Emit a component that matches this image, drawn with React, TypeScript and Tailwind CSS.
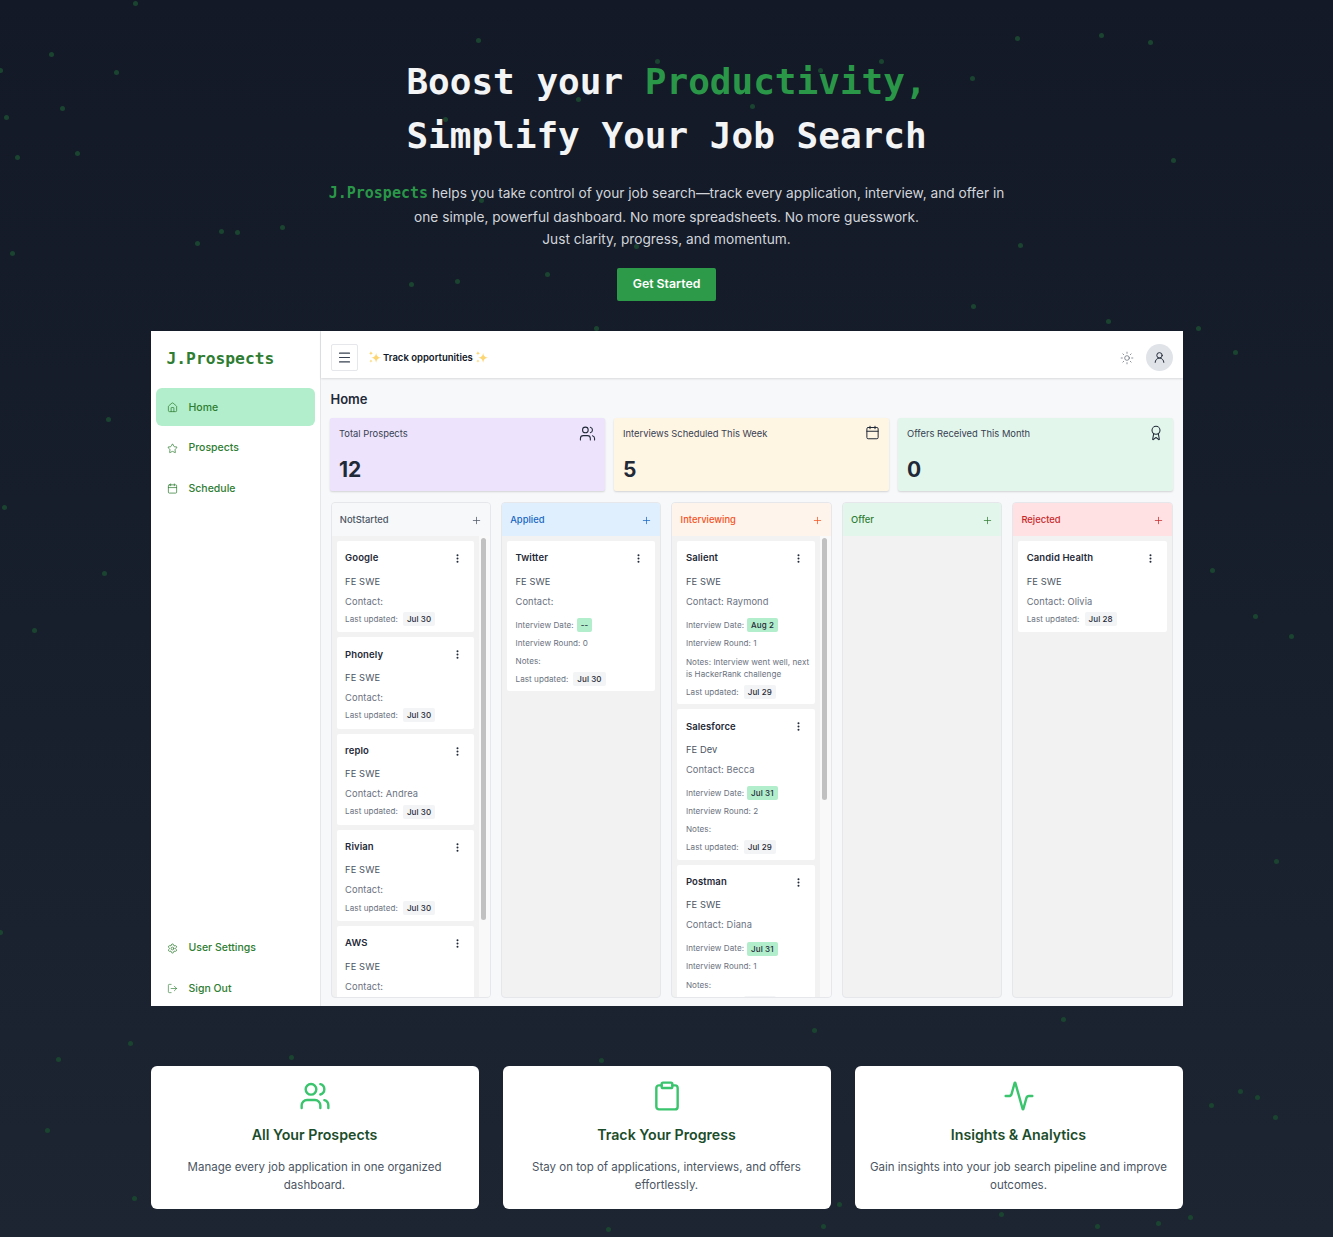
import {
  Activity,
  Award,
  Calendar,
  Clipboard,
  EllipsisVertical,
  House,
  LogOut,
  Menu,
  Plus,
  Settings,
  Star,
  Sun,
  UserRound,
  Users,
} from 'lucide-react';

const dots = [
  [135, 3], [51, 54], [116, 72], [0, 70], [62, 108], [6, 117], [17, 157], [77, 153], [478, 40], [657, 61],
  [881, 61], [820, 70], [972, 78], [578, 99], [752, 106], [445, 119], [481, 200], [636, 246], [1017, 38],
  [1101, 35], [1150, 42], [1173, 160], [197, 243], [221, 231], [237, 232], [282, 227], [12, 253], [547, 274],
  [411, 284], [457, 281], [1020, 245], [973, 306], [1108, 321], [1198, 328], [1235, 352], [1212, 570],
  [1255, 616], [1291, 636], [1276, 861], [104, 573], [34, 630], [4, 507], [108, 419], [0, 932], [130, 1043],
  [58, 1059], [47, 1130], [291, 1057], [814, 1030], [1063, 1019], [1211, 1105], [1240, 1091], [1257, 1097],
  [1275, 1117], [1158, 1223], [1097, 1226], [1001, 1214], [839, 1204], [608, 1229], [823, 1226], [601, 1060],
  [1190, 1217], [596, 328], [134, 1198],
];

type Prospect = {
  name: string;
  role: string;
  contact?: string;
  updated: string;
  interview?: string;
  round?: number;
  notes?: string;
};

const notStarted: Prospect[] = [
  { name: 'Google', role: 'FE SWE', updated: 'Jul 30' },
  { name: 'Phonely', role: 'FE SWE', updated: 'Jul 30' },
  { name: 'replo', role: 'FE SWE', contact: 'Andrea', updated: 'Jul 30' },
  { name: 'Rivian', role: 'FE SWE', updated: 'Jul 30' },
  { name: 'AWS', role: 'FE SWE', updated: 'Jul 30' },
];

const applied: Prospect[] = [
  { name: 'Twitter', role: 'FE SWE', updated: 'Jul 30', interview: '--', round: 0 },
];

const interviewing: Prospect[] = [
  {
    name: 'Salient',
    role: 'FE SWE',
    contact: 'Raymond',
    updated: 'Jul 29',
    interview: 'Aug 2',
    round: 1,
    notes: 'Interview went well, next is HackerRank challenge',
  },
  { name: 'Salesforce', role: 'FE Dev', contact: 'Becca', updated: 'Jul 29', interview: 'Jul 31', round: 2 },
  { name: 'Postman', role: 'FE SWE', contact: 'Diana', updated: 'Jul 29', interview: 'Jul 31', round: 1 },
];

const rejected: Prospect[] = [{ name: 'Candid Health', role: 'FE SWE', contact: 'Olivia', updated: 'Jul 28' }];

function Sparkle() {
  return (
    <svg viewBox="0 0 24 24" className="h-[13px] w-[13px] shrink-0" fill="#fcd673">
      <path d="M15 3c1 6.200 3 8.300 9 9.300-6 1-8 3.100-9 9.300-1-6.200-3-8.300-9-9.300 6-1 8-3.100 9-9.300z" />
      <path d="M5.500 0c.5 2.800 1.300 3.700 4 4.200-2.700.5-3.500 1.400-4 4.200-.5-2.800-1.300-3.700-4-4.200 2.700-.5 3.500-1.400 4-4.200z" />
      <path d="M5.500 15c.4 2.300 1.100 3 3.500 3.500-2.400.5-3.100 1.200-3.500 3.500-.4-2.300-1.100-3-3.500-3.500 2.400-.5 3.100-1.200 3.500-3.500z" />
    </svg>
  );
}

function NavItem({ icon, label, active }: { icon: React.ReactNode; label: string; active?: boolean }) {
  return (
    <div
      className={`flex h-[38px] items-center gap-[11px] rounded-[6px] pl-[11px] pt-px text-[10.500px] font-medium text-[#2e7d32] ${
        active ? 'bg-[#b2eecb]' : ''
      }`}
    >
      {icon}
      <span>{label}</span>
    </div>
  );
}

function Sidebar() {
  return (
    <aside className="flex w-[170px] shrink-0 flex-col border-r border-[#e5e7eb] bg-white px-[5px]">
      <div className="flex h-[57px] items-center pl-[11px] font-['DejaVu_Sans_Mono',monospace] text-[16.300px] font-bold text-[#2e7d32]">
        J.Prospects
      </div>
      <nav className="flex flex-col gap-[2.500px]">
        <NavItem active label="Home" icon={<House size={11} strokeWidth={1.6} />} />
        <NavItem label="Prospects" icon={<Star size={11} strokeWidth={1.6} />} />
        <NavItem label="Schedule" icon={<Calendar size={11} strokeWidth={1.6} />} />
      </nav>
      <div className="-mb-px mt-auto flex flex-col gap-[2.500px]">
        <NavItem label="User Settings" icon={<Settings size={11} strokeWidth={1.6} />} />
        <NavItem label="Sign Out" icon={<LogOut size={11} strokeWidth={1.4} />} />
      </div>
    </aside>
  );
}

function Topbar() {
  return (
    <header className="z-10 flex h-[47px] shrink-0 items-center bg-white px-[10px] pt-[6px] shadow-[0_1px_2px_rgba(0,0,0,0.12)]">
      <button className="flex h-[27px] w-[27px] items-center justify-center rounded-[2px] border border-[#e5e7eb] text-[#374151]">
        <Menu size={15} strokeWidth={1.8} />
      </button>
      <div className="ml-[10px] flex items-center gap-[2.500px] text-[9.500px] font-semibold text-[#111827]">
        <Sparkle />
        <span className="mt-px">Track opportunities</span>
        <Sparkle />
      </div>
      <div className="ml-auto flex items-center gap-[12px]">
        <Sun size={14} strokeWidth={1.1} className="text-[#4b5563]" />
        <div className="flex h-[27px] w-[27px] items-center justify-center rounded-full bg-[#e0e3e8] text-[#1f2937]">
          <UserRound size={13} strokeWidth={1.8} />
        </div>
      </div>
    </header>
  );
}

function StatCard({ label, value, icon, tone }: { label: string; value: number; icon: React.ReactNode; tone: string }) {
  return (
    <div className={`flex h-[73px] flex-col rounded-[2px] pl-[9.500px] pr-[9px] pt-[7px] shadow-[0_1px_2px_rgba(0,0,0,0.15)] ${tone}`}>
      <div className="flex h-[18px] items-start justify-between text-[#1f2937]">
        <span className="mt-[2px] text-[9.400px] leading-[14px] text-[#374151]">{label}</span>
        {icon}
      </div>
      <div className="mt-[15px] text-[21px] font-bold leading-[24px] text-[#1f2937]">{value}</div>
    </div>
  );
}

function Pill({ children, green }: { children: React.ReactNode; green?: boolean }) {
  return (
    <span
      className={`ml-[3px] inline-flex h-[14px] items-center rounded-[2px] px-[4px] text-[8px] font-medium tracking-[0.1px] text-[#1f2937] ${
        green ? 'bg-[#b2eecb]' : 'bg-[#f3f4f6]'
      }`}
    >
      {children}
    </span>
  );
}

function ProspectCard({ p }: { p: Prospect }) {
  const hasInterview = p.interview !== undefined;
  const multi = (p.notes ?? '').length > 30;
  const small = 'text-[8.100px] tracking-[0.05px] text-[#6b7280]';
  return (
    <div className={`shrink-0 rounded-[2px] bg-white pl-[8.600px] pr-[8.400px] pt-[8.500px] ${hasInterview ? 'pb-[5.250px]' : 'pb-[6.250px]'}`}>
      <div className="flex h-[18px] items-center justify-between">
        <span className="text-[9.500px] font-semibold tracking-[0.1px] text-[#1f2937]">{p.name}</span>
        <span className="flex w-[16px] justify-center text-[#1f2937]">
          <EllipsisVertical size={11} strokeWidth={2.4} />
        </span>
      </div>
      <div className="mt-[6px] h-[16px] text-[9.300px] leading-[16px] tracking-[0.1px] text-[#4b5563]">{p.role}</div>
      <div className="mt-[4px] h-[16px] text-[9.300px] leading-[16px] tracking-[0.1px] text-[#6b7280]">
        Contact:{p.contact ? ` ${p.contact}` : ''}
      </div>
      {hasInterview && (
        <>
          <div className={`mt-[8.500px] flex h-[14px] items-center ${small}`}>
            Interview Date: <Pill green>{p.interview}</Pill>
          </div>
          <div className={`mt-[4px] flex h-[14px] items-center ${small}`}>Interview Round: {p.round}</div>
          <div className={`mt-[4px] ${small} ${multi ? '-mr-[5px] py-[1.500px] leading-[12px]' : 'h-[14px] leading-[14px]'}`}>
            Notes:{p.notes ? ` ${p.notes}` : ''}
          </div>
        </>
      )}
      <div className={`flex h-[14px] items-center ${small} ${hasInterview ? 'mt-[4px]' : 'mt-[2.500px]'}`}>
        Last updated: <span className="w-[2px]" />
        <Pill>{p.updated}</Pill>
      </div>
    </div>
  );
}

function BoardColumn({
  title,
  head,
  items,
  thumb,
}: {
  title: string;
  head: string;
  items: Prospect[];
  thumb?: string;
}) {
  return (
    <section className="flex min-h-0 min-w-0 flex-1 flex-col overflow-hidden rounded-[4px] border border-[#e5e7eb] bg-[#f2f2f2]">
      <div className={`flex h-[33px] shrink-0 items-center justify-between pl-[8.300px] pr-[8px] pt-[2px] text-[9.400px] font-medium ${head}`}>
        <span>{title}</span>
        <Plus size={11} strokeWidth={1.6} />
      </div>
      <div className="flex min-h-0 flex-1">
        <div className="flex min-w-0 flex-1 flex-col gap-[5px] overflow-hidden px-[5px] pt-[5px]">
          {items.map((p) => (
            <ProspectCard key={p.name} p={p} />
          ))}
        </div>
        {thumb && (
          <div className="w-[11px] shrink-0 bg-[#f9f9f9] pl-[2px] pt-[2px]">
            <div className={`w-[5px] rounded-full bg-[#c1c1c1] ${thumb}`} />
          </div>
        )}
      </div>
    </section>
  );
}

function Dashboard() {
  return (
    <div className="flex h-[675px] overflow-hidden bg-[#f7f8fa] font-['Inter',sans-serif]">
      <Sidebar />
      <div className="flex min-w-0 flex-1 flex-col">
        <Topbar />
        <main className="flex min-h-0 flex-1 flex-col px-[10px] pb-[8px] pt-[13px]">
          <h2 className="text-[13px] font-semibold leading-[16px] text-[#1f2937]">Home</h2>
          <div className="-ml-px mt-[11px] grid grid-cols-3 gap-[9px]">
            <StatCard
              label="Total Prospects"
              value={12}
              tone="bg-[#ede3fc]"
              icon={<Users size={17} strokeWidth={1.5} />}
            />
            <StatCard
              label="Interviews Scheduled This Week"
              value={5}
              tone="bg-[#fff5e3]"
              icon={<Calendar size={15} strokeWidth={1.6} />}
            />
            <StatCard
              label="Offers Received This Month"
              value={0}
              tone="bg-[#e3f6ec]"
              icon={<Award size={16} strokeWidth={1.6} />}
            />
          </div>
          <div className="mt-[11px] flex min-h-0 flex-1 gap-[10px]">
            <BoardColumn title="NotStarted" head="bg-[#f7f8fa] text-[#4b5563]" items={notStarted} thumb="h-[382px]" />
            <BoardColumn title="Applied" head="bg-[#e0effe] text-[#1565c0]" items={applied} />
            <BoardColumn title="Interviewing" head="bg-[#fff4eb] text-[#f4511e]" items={interviewing} thumb="h-[262px]" />
            <BoardColumn title="Offer" head="bg-[#e3f6ec] text-[#2e7d32]" items={[]} />
            <BoardColumn title="Rejected" head="bg-[#ffe0e3] text-[#c62828]" items={rejected} />
          </div>
        </main>
      </div>
    </div>
  );
}

function Feature({ icon, title, text }: { icon: React.ReactNode; title: string; text: string }) {
  return (
    <div className="flex h-[143px] flex-col items-center rounded-[6px] bg-white px-[14px] pt-[14px] text-center">
      <div className="flex h-[32px] items-center justify-center text-[#3ac46d]">{icon}</div>
      <h3 className="mt-[12px] text-[14.200px] font-semibold leading-[22px] text-[#1b4d2b]">{title}</h3>
      <p className="mt-[12px] text-[11.500px] leading-[18px] text-[#4b5563]">{text}</p>
    </div>
  );
}

export default function App() {
  return (
    <div className="relative min-h-[1237px] overflow-hidden bg-gradient-to-b from-[#131926] to-[#1d2532] font-['Inter',sans-serif]">
      {dots.map(([x, y]) => (
        <span
          key={`${x}-${y}`}
          className="absolute h-[5px] w-[5px] rounded-full bg-[#1a4430]"
          style={{ left: x - 2.5, top: y - 2.5 }}
        />
      ))}
      <div className="relative mx-auto flex w-[1032px] flex-col items-center pt-[55px]">
        <h1 className="text-center font-['DejaVu_Sans_Mono',monospace] text-[36px] font-bold leading-[54px] text-[#f3f4f6]">
          Boost your <span className="text-[#2a9748]">Productivity,</span>
          <br />
          Simplify Your Job Search
        </h1>
        <p className="mt-[17px] w-[700px] text-center text-[13.700px] leading-[22px] text-[#d1d5db]">
          <span className="inline-block font-['DejaVu_Sans_Mono',monospace] text-[15px] font-bold leading-[26px] text-[#2a9748]">
            J.Prospects
          </span>{' '}
          helps you take control of your job search—track every application, interview, and offer in
          <br />
          one simple, powerful dashboard. No more spreadsheets. No more guesswork.
          <br />
          Just clarity, progress, and momentum.
        </p>
        <button className="mt-[18px] flex h-[33px] w-[99px] items-center justify-center rounded-[2px] bg-[#2d9a49] text-[12.300px] font-semibold text-white">
          Get Started
        </button>
        <div className="mt-[30px] w-full">
          <Dashboard />
        </div>
        <div className="mt-[60px] grid w-full grid-cols-3 gap-[24px]">
          <Feature
            icon={<Users size={32} strokeWidth={1.8} />}
            title="All Your Prospects"
            text="Manage every job application in one organized dashboard."
          />
          <Feature
            icon={<Clipboard size={32} strokeWidth={1.8} />}
            title="Track Your Progress"
            text="Stay on top of applications, interviews, and offers effortlessly."
          />
          <Feature
            icon={<Activity size={32} strokeWidth={1.8} />}
            title="Insights & Analytics"
            text="Gain insights into your job search pipeline and improve outcomes."
          />
        </div>
      </div>
    </div>
  );
}
